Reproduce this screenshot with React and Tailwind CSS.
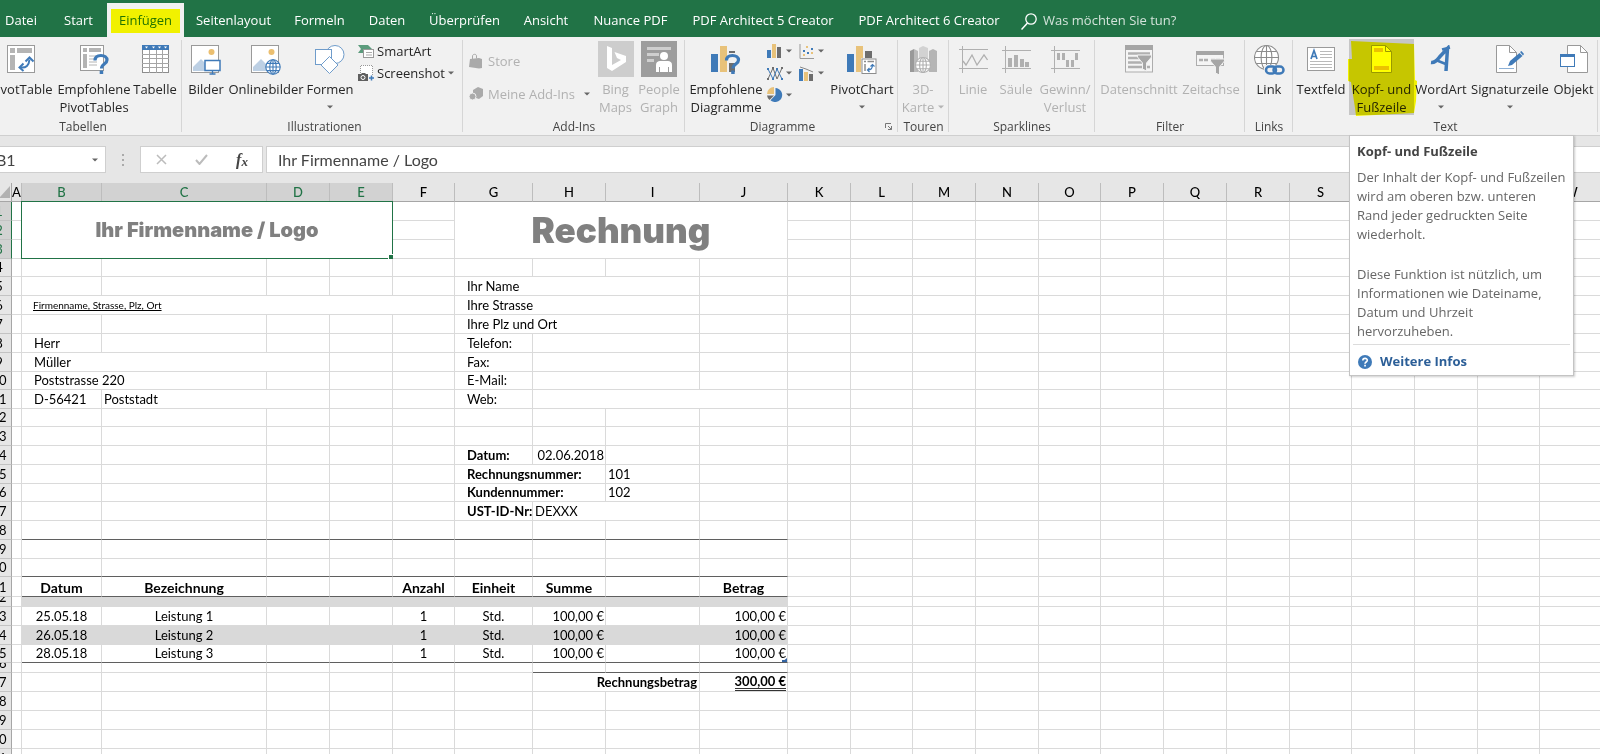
import React from 'react';
import clsx from 'clsx';

const tabs = [
  { name: 'Datei', width: 'w-[58px]' },
  { name: 'Start', width: 'w-[57px]' },
  { name: 'Einfügen', width: 'w-[77px]', active: true },
  { name: 'Seitenlayout', width: 'w-[99px]' },
  { name: 'Formeln', width: 'w-[73px]' },
  { name: 'Daten', width: 'w-[62px]' },
  { name: 'Überprüfen', width: 'w-[93px]' },
  { name: 'Ansicht', width: 'w-[70px]' },
  { name: 'Nuance PDF', width: 'w-[99px]' },
  { name: 'PDF Architect 5 Creator', width: 'w-[166px]' },
  { name: 'PDF Architect 6 Creator', width: 'w-[166px]' },
];

const BLUE = '#3f7ab8';
const SAND = '#e8c27a';
const GREY = '#b4b4b4';
const DARK = '#6d6d6d';

function Svg({ w = 28, h = 28, children, className }) {
  return (
    <svg width={w} height={h} viewBox={`0 0 ${w} ${h}`} fill="none" className={clsx('shrink-0', className)} aria-hidden="true">
      {children}
    </svg>
  );
}

function Arrow({ light }) {
  return (
    <Svg w={6} h={4}>
      <path d="M0 0.5h6L3 3.5z" fill={light ? '#b4b4b4' : '#666'} />
    </Svg>
  );
}

/* ---------- big ribbon icons ---------- */

function PivotTableIcon() {
  return (
    <Svg>
      <rect x="0.5" y="0.5" width="27" height="27" fill="#fff" stroke="#9a9a9a" />
      <path d="M3 3h5v5H3zM10 3h15v5H10zM3 10h5v15H3z" fill={GREY} />
      <path d="M14 22.500c5 .5 8-2 8.500-8" stroke={BLUE} strokeWidth="2" />
      <path d="M18.500 16.500l4-4 4 4M16.500 18.500l-4 4 4 3.500" stroke={BLUE} strokeWidth="2" />
    </Svg>
  );
}

function QuestionMark({ x, y }) {
  return (
    <g transform={`translate(${x} ${y})`}>
      <path d="M1 6.500C1 3 3.500 1.500 7 1.500s6 1.700 6 4.500c0 4.500-5.500 3.500-5.500 8.500" stroke={BLUE} strokeWidth="3.200" />
      <rect x="5.700" y="16.500" width="3.500" height="3.500" fill={BLUE} />
    </g>
  );
}

function RecommendedPivotIcon() {
  return (
    <Svg w={30} h={30}>
      <rect x="1.500" y="0.500" width="23" height="25" fill="#fff" stroke="#9a9a9a" />
      <path d="M4 3h4v4H4zM10 3h12v4H10zM4 9h4v14H4z" fill={GREY} />
      <path d="M10 11h8M10 14h8M10 17h8M10 20h8" stroke={GREY} />
      <QuestionMark x={15} y={9} />
    </Svg>
  );
}

function TableIcon() {
  return (
    <Svg w={27}>
      <rect x="0.500" y="0.500" width="26" height="27" fill="#fff" stroke="#8d8d8d" />
      <path d="M0 0h27v5H0z" fill={BLUE} />
      <path d="M3 1.500h3l-1.500 2zM10 1.500h3l-1.500 2zM16 1.500h3l-1.500 2zM22 1.500h3l-1.500 2z" fill="#fff" />
      <path d="M0 9.500h27M0 13.500h27M0 18.500h27M0 22.500h27M7.500 5v23M14.500 5v23M20.500 5v23" stroke="#a5a5a5" />
    </Svg>
  );
}

function Picture() {
  return (
    <>
      <rect x="0.500" y="0.500" width="27" height="27" fill="#fff" stroke="#9a9a9a" />
      <circle cx="20.500" cy="7" r="3" fill="#ebbf70" />
      <path d="M2 26v-4l8-8 7 7v5z" fill="#bdd0e4" />
    </>
  );
}

function PicturesIcon() {
  return (
    <Svg w={30} h={30}>
      <Picture />
      <rect x="14" y="15.500" width="15" height="10" fill="#fff" stroke={BLUE} strokeWidth="1.500" />
      <path d="M21.500 26v3M18.500 29h6" stroke={BLUE} strokeWidth="1.300" />
    </Svg>
  );
}

function Globe({ cx, cy, r, color }) {
  return (
    <g stroke={color} strokeWidth="1.100" fill="#fff">
      <circle cx={cx} cy={cy} r={r} />
      <ellipse cx={cx} cy={cy} rx={r * 0.45} ry={r} />
      <path d={`M${cx - r} ${cy}h${r * 2}M${cx} ${cy - r}v${r * 2}M${cx - r * 0.85} ${cy - r * 0.5}h${r * 1.7}M${cx - r * 0.85} ${cy + r * 0.5}h${r * 1.7}`} />
    </g>
  );
}

function OnlinePicturesIcon() {
  return (
    <Svg w={30} h={30}>
      <Picture />
      <Globe cx={22} cy={22} r={7.2} color={BLUE} />
    </Svg>
  );
}

function ShapesIcon() {
  return (
    <Svg w={30} h={29}>
      <circle cx="20" cy="9.500" r="9" fill="#fff" stroke="#6f9ccb" />
      <rect x="0.500" y="4.500" width="16" height="15" fill="#fff" stroke="#6f9ccb" />
      <path d="M14.500 11.500l8.500 8.500-8.500 8.500L6 20z" fill="#fff" stroke="#6f9ccb" />
    </Svg>
  );
}

function BingIcon() {
  return (
    <Svg w={36} h={36}>
      <path d="M0 0h36v36H0z" fill="#cdcdcd" />
      <path d="M9 5l5 2v17l9-5-4-2-2.500-6L28 15v6l-14 9-5-3z" fill="#fff" />
    </Svg>
  );
}

function PeopleIcon() {
  return (
    <Svg w={36} h={36}>
      <path d="M0 0h36v36H0z" fill="#9d9d9d" />
      <path d="M6 6h24v3H6zM6 12h12v3H6zM6 18h7v3H6z" fill="#cfcfcf" />
      <circle cx="23" cy="15" r="4" fill="#fff" />
      <path d="M15 31V24c0-3 2-4 4-4h8c2 0 4 1 4 4v7h-3v-5h-1v5h-8v-5h-1v5z" fill="#fff" />
    </Svg>
  );
}

function RecommendedChartsIcon() {
  return (
    <Svg w={30} h={29}>
      <path d="M0 9h7v18H0z" fill={BLUE} />
      <path d="M9 1h7v26H9z" fill={SAND} />
      <path d="M18 6h6v21h-6z" fill={DARK} />
      <path d="M18 8h8v10h-8z" fill="#f1f1f1" />
      <QuestionMark x={14.500} y={9} />
    </Svg>
  );
}

function PivotChartIcon() {
  return (
    <Svg w={30} h={29}>
      <path d="M0 9h7v18H0z" fill={BLUE} />
      <path d="M9 1h7v26H9z" fill={SAND} />
      <path d="M18 6h7v12h-7z" fill={DARK} />
      <rect x="14" y="13" width="16" height="16" fill="#f1f1f1" />
      <rect x="15" y="14" width="14" height="14.500" fill="#fff" stroke="#8d8d8d" />
      <path d="M17 16.500h2M20.500 16.500H27M18 19v7" stroke="#8d8d8d" strokeWidth="1.500" />
      <path d="M21 25c3 0 4.500-1.500 4.500-5M23.500 21.500l2-2 2 2M22.500 23l-2 2 2 2" stroke={BLUE} strokeWidth="1.200" />
    </Svg>
  );
}

function MapIcon() {
  return (
    <Svg>
      <path d="M1 6l4-2v23H1z" fill="#999" />
      <path d="M5 4l4 2v21H5z" fill="#bbb" />
      <path d="M10 3l4-2 5 2v12h-9z" fill="#d2d2d2" />
      <path d="M20 6l4-2 4 2v21h-8z" fill="#b5b5b5" />
      <Globe cx={14} cy={20} r={7.5} color="#b0b0b0" />
    </Svg>
  );
}

function SparkLineIcon() {
  return (
    <Svg w={29}>
      <path d="M3.500 1v27M0 4.500h29M0 23.500h29" stroke="#b0b0b0" />
      <path d="M4 16l3 4 6-10 5 10 7-10 3.500 5" stroke="#b0b0b0" strokeWidth="1.300" />
    </Svg>
  );
}

function SparkColumnIcon() {
  return (
    <Svg w={29}>
      <path d="M3.500 1v27M0 5.500h29M0 23.500h29" stroke="#b0b0b0" />
      <path d="M6 13h4v9H6zM12 10h4v12h-4zM18 14h4v8h-4zM23 17h4v5h-4z" fill="#b0b0b0" />
    </Svg>
  );
}

function SparkWinLossIcon() {
  return (
    <Svg w={29}>
      <path d="M3.500 1v27M0 5.500h29M0 23.500h29" stroke="#b0b0b0" />
      <path d="M6 8h3v7H6zM11 8h3v7h-3zM15 15h3v7h-3zM20 15h3v7h-3zM24 8h3v7h-3z" fill="#b0b0b0" />
    </Svg>
  );
}

function Funnel({ x, y }) {
  return <path transform={`translate(${x} ${y})`} d="M0 0h14v2L9 8v8l-4-2V8L0 2z" fill="#a6a6a6" stroke="#f1f1f1" />;
}

function SlicerIcon() {
  return (
    <Svg>
      <rect x="0.500" y="0.500" width="27" height="26.500" fill="#f5f5f5" stroke="#adadad" />
      <path d="M0 0h28v5H0z" fill="#a6a6a6" />
      <path d="M3 8.500h22M3 13h22M3 17.500h14M3 22h14M20 22h5" stroke="#b0b0b0" strokeWidth="2.500" />
      <Funnel x={12.500} y={10} />
    </Svg>
  );
}

function TimelineIcon() {
  return (
    <Svg w={30} h={30}>
      <rect x="0.500" y="6.500" width="27" height="14" fill="#f5f5f5" stroke="#adadad" />
      <path d="M0 6h28v4H0z" fill="#a6a6a6" />
      <path d="M3 15h10M15 15h10" stroke="#b0b0b0" strokeWidth="2.500" strokeDasharray="4 1" />
      <Funnel x={14.500} y={14} />
    </Svg>
  );
}

function LinkIcon() {
  return (
    <Svg w={31} h={30}>
      <Globe cx={12.500} cy={12.500} r={12} color="#8c8c8c" />
      <path d="M10 20h20v10H10z" fill="#f1f1f1" />
      <rect x="12" y="21.500" width="10" height="7" rx="3.500" stroke={BLUE} strokeWidth="2.500" />
      <rect x="19.500" y="21.500" width="10" height="7" rx="3.500" stroke={BLUE} strokeWidth="2.500" />
    </Svg>
  );
}

function TextBoxIcon() {
  return (
    <Svg>
      <rect x="0.500" y="2.500" width="27" height="23" fill="#fff" stroke="#9a9a9a" />
      <path d="M4 14L7 5.500 10 14M5 11.500h4" stroke={BLUE} strokeWidth="1.700" />
      <path d="M13 6.500h12M13 9.500h12M13 12.500h12M3 16.500h22M3 19.500h22M3 22.500h22" stroke="#b9b9b9" />
    </Svg>
  );
}

function HeaderFooterIcon() {
  return (
    <Svg w={21}>
      <path d="M0.500 0.500h14l6 6v21H0.500z" fill="#fff" stroke="#999" />
      <path d="M14.500 0.500v6h6" stroke="#999" />
      <path d="M3 3h9v4H3zM3 21h15v4H3z" fill="#ebc250" />
    </Svg>
  );
}

function WordArtIcon() {
  return (
    <Svg w={22}>
      <path d="M1 17.500C5 18 7 15 10 11.500L17.500 3.500 16 26" stroke={BLUE} strokeWidth="3.500" />
      <path d="M7 15.500l10 4" stroke={BLUE} strokeWidth="2.500" />
      <path d="M12 4.500L20 2.500" stroke={BLUE} strokeWidth="2.500" />
    </Svg>
  );
}

function SignatureIcon() {
  return (
    <Svg w={28}>
      <path d="M0.500 0.500h13l7 7v20H0.500z" fill="#fff" stroke="#999" />
      <path d="M13.500 0.500v7h7" stroke="#999" />
      <path d="M3 23.500h15" stroke="#8db0d6" />
      <path d="M12 21l2-5L23.500 8l3 3L16 20z" fill={BLUE} />
      <path d="M24 7l1.500-1L28 9l-1 1.500z" fill={BLUE} />
    </Svg>
  );
}

function ObjectIcon() {
  return (
    <Svg w={28}>
      <path d="M7.500 0.500h13l7 7v20h-20z" fill="#fff" stroke="#999" />
      <path d="M20.500 0.500v7h7" stroke="#999" />
      <rect x="0.500" y="9.500" width="14" height="12" fill="#fff" stroke={BLUE} />
      <path d="M0 9h15v3H0z" fill={BLUE} />
    </Svg>
  );
}

/* ---------- small ribbon icons ---------- */

function SmartArtIcon() {
  return (
    <Svg w={16} h={14}>
      <path d="M0 1h10l4 4H8l-2 4H0l3-4z" fill="#5b9b7c" />
      <rect x="5.500" y="5.500" width="10" height="8" fill="#fff" stroke="#999" />
      <path d="M8 8.500h6M8 11h6" stroke="#aaa" />
    </Svg>
  );
}

function ScreenshotIcon() {
  return (
    <Svg w={16} h={16}>
      <path d="M2.500 10V0.500h12V11" stroke="#999" strokeDasharray="1 1" fill="#fff" />
      <path d="M0 9h3l1-1h3l1 1h2v7H0z" fill="#5f5f5f" />
      <circle cx="5" cy="12.500" r="2" fill="#5f5f5f" stroke="#fff" />
      <path d="M11 13h5M13.500 10.500v5" stroke={BLUE} strokeWidth="1.500" />
    </Svg>
  );
}

function StoreIcon() {
  return (
    <Svg w={14} h={16}>
      <path d="M1 6l9-1 3 1v9l-3 .5L0 14z" fill="#aaa" />
      <path d="M3.500 6V3c0-2 4-2.500 4 0v2.500" stroke="#aaa" />
    </Svg>
  );
}

function AddInsIcon() {
  return (
    <Svg w={14} h={14}>
      <path d="M4 3l5-3 5 2v7l-4 3-6-2z" fill="#aaa" />
      <circle cx="3.500" cy="9.500" r="3.500" fill="#aaa" stroke="#f1f1f1" />
    </Svg>
  );
}

function ColumnChartIcon() {
  return (
    <Svg w={14} h={14}>
      <path d="M0 6h4v8H0z" fill={BLUE} />
      <path d="M5 0h4v14H5z" fill={SAND} />
      <path d="M10 3h4v11h-4z" fill={DARK} />
    </Svg>
  );
}

function ScatterIcon() {
  return (
    <Svg w={15} h={15}>
      <path d="M1 0v14.500h14" stroke="#999" />
      <path d="M7 2h2v2H7zM4 10h2v2H4zM12 8h2v2h-2z" fill={SAND} />
      <path d="M4 6h2v2H4zM8 8h2v2H8zM12 4h2v2h-2z" fill={BLUE} />
    </Svg>
  );
}

function LineChartIcon() {
  return (
    <Svg w={16} h={15}>
      <path d="M1 13L6 2l4 11 5-11" stroke={DARK} />
      <path d="M1 3l5 10 4-10 5 10" stroke={BLUE} />
      <path d="M0 2h2v2H0zM5 12h2v2H5zM9 2h2v2H9zM14 12h2v2h-2z" fill={BLUE} />
      <path d="M0 12h2v2H0zM5 1h2v2H5zM14 1h2v2h-2z" fill={DARK} />
    </Svg>
  );
}

function ComboIcon() {
  return (
    <Svg w={15} h={15}>
      <path d="M0 3h4v12H0z" fill={BLUE} />
      <path d="M5 6h4v9H5z" fill={SAND} />
      <path d="M10 8h4v7h-4z" fill={DARK} />
      <path d="M1 1l6 2 7 3" stroke="#888" />
    </Svg>
  );
}

function PieIcon() {
  return (
    <Svg w={16} h={16}>
      <path d="M8.500 1a7 7 0 11-5 12.200L8.500 8z" fill={BLUE} />
      <path d="M7 0v7H0a7 7 0 017-7z" fill={SAND} />
      <path d="M0 8.500h7L2.500 13A7 7 0 010 8.500z" fill={DARK} />
    </Svg>
  );
}

/* ---------- ribbon building blocks ---------- */

function BigButton({ icon, lines, width, disabled, arrow, tall, children }) {
  return (
    <div className={clsx('relative shrink-0', width)}>
      <button
        type="button"
        disabled={disabled}
        className={clsx(
          'flex h-[79px] w-full flex-col items-center text-[13px] leading-[18px] whitespace-nowrap',
          tall ? 'pt-1' : 'pt-2',
          disabled ? 'text-[#b1b1b1]' : 'text-[#262626]'
        )}
      >
        <span className={clsx('flex justify-center', tall ? 'h-[39px]' : 'h-[35px]')}>{icon}</span>
        {lines.map((line) => (
          <span key={line} className="flex items-center gap-1">
            {line}
            {arrow === 'inline' && line === lines[lines.length - 1] && <Arrow light={disabled} />}
          </span>
        ))}
        {arrow === 'below' && (
          <span className="flex h-[18px] items-center">
            <Arrow />
          </span>
        )}
      </button>
      {children}
    </div>
  );
}

function Group({ label, width, launcher, children }) {
  return (
    <section className={clsx('relative shrink-0', width)}>
      <div className="flex h-[79px]">{children}</div>
      <div className={clsx('pt-[2px] text-center text-[12px] leading-[17px] text-[#444]', launcher && 'pr-[18px]')}>{label}</div>
      {launcher && (
        <button type="button" aria-label="Diagramme-Dialog" className="absolute right-[6px] bottom-[5px]">
          <Svg w={7} h={7}>
            <path d="M0.500 5V0.500H6M3 3l3.500 3.500M6.500 3v3.500H3" stroke="#777" />
          </Svg>
        </button>
      )}
      <span className="absolute top-[3px] right-0 bottom-[3px] w-px bg-[#d6d6d6]" />
    </section>
  );
}

function SmallButton({ icon, label, disabled, arrow, wide }) {
  return (
    <button
      type="button"
      disabled={disabled}
      className={clsx('flex items-center text-[13px] leading-[18px] whitespace-nowrap', disabled ? 'text-[#b1b1b1]' : 'text-[#262626]', wide && 'w-[121px]')}
    >
      <span className="flex w-[19px] items-center">{icon}</span>
      <span className={clsx(wide && 'flex-1 text-left')}>{label}</span>
      {arrow && <span className="ml-[3px]"><Arrow /></span>}
    </button>
  );
}

function ChartButton({ icon, label }) {
  return (
    <button type="button" aria-label={label} className="flex h-[22px] w-[32px] items-center justify-between pr-[7px]">
      {icon}
      <Arrow />
    </button>
  );
}

function HelpTooltip() {
  return (
    <div role="tooltip" className="absolute top-[98px] left-0 z-20 w-[225px] border border-[#c4c4c4] bg-white px-[3px] pt-[6px] text-[13px] leading-[19px] text-[#666] shadow-[1px_1px_2px_rgba(0,0,0,0.2)]">
      <div className="px-1 font-bold text-[#444]">Kopf- und Fußzeile</div>
      <p className="mt-[7px] px-1 whitespace-nowrap">
        Der Inhalt der Kopf- und Fußzeilen<br />
        wird am oberen bzw. unteren<br />
        Rand jeder gedruckten Seite<br />
        wiederholt.
      </p>
      <p className="mt-[21px] px-1 whitespace-nowrap">
        Diese Funktion ist nützlich, um<br />
        Informationen wie Dateiname,<br />
        Datum und Uhrzeit<br />
        hervorzuheben.
      </p>
      <div className="mt-[3px] flex h-[31px] items-center gap-2 border-t border-[#dcdcdc] px-[5px] pt-[3px]">
        <Svg w={14} h={14}>
          <circle cx="7" cy="7" r="7" fill={BLUE} />
          <path d="M4.800 5.500C4.800 2.700 9.300 2.700 9.300 5.300 9.300 7 7 7 7 8.700" stroke="#fff" strokeWidth="1.600" />
          <path d="M6.200 9.700h1.700v1.700H6.200z" fill="#fff" />
        </Svg>
        <a href="#infos" className="font-bold text-[#2b5e97]">Weitere Infos</a>
      </div>
    </div>
  );
}

function Ribbon() {
  return (
    <div className="relative z-10 flex border-b border-[#cfcfcf] bg-[#f1f1f1]">
      <div className="-ml-4 flex">
        <Group label="Tabellen" width="w-[198px]">
          <BigButton icon={<PivotTableIcon />} lines={['PivotTable']} width="w-[74px]" />
          <BigButton icon={<RecommendedPivotIcon />} lines={['Empfohlene', 'PivotTables']} width="w-[72px]" />
          <BigButton icon={<TableIcon />} lines={['Tabelle']} width="w-[50px]" />
        </Group>
        <Group label="Illustrationen" width="w-[281px] pl-1">
          <BigButton icon={<PicturesIcon />} lines={['Bilder']} width="w-[40px]" />
          <BigButton icon={<OnlinePicturesIcon />} lines={['Onlinebilder']} width="w-[80px]" />
          <BigButton icon={<ShapesIcon />} lines={['Formen']} width="w-[48px]" arrow="below" />
          <div className="flex flex-col items-start gap-1 pt-[5px] pl-1">
            <SmallButton icon={<SmartArtIcon />} label="SmartArt" />
            <SmallButton icon={<ScreenshotIcon />} label="Screenshot" arrow />
          </div>
        </Group>
        <Group label="Add-Ins" width="w-[222px]">
          <div className="flex w-[131px] flex-col items-start gap-[15px] pt-[15px] pl-[6px]">
            <SmallButton icon={<StoreIcon />} label="Store" disabled />
            <SmallButton icon={<AddInsIcon />} label="Meine Add-Ins" disabled arrow wide />
          </div>
          <BigButton icon={<BingIcon />} lines={['Bing', 'Maps']} width="w-[43px]" tall disabled />
          <BigButton icon={<PeopleIcon />} lines={['People', 'Graph']} width="w-[44px]" tall disabled />
        </Group>
        <Group label="Diagramme" width="w-[213px]" launcher>
          <BigButton icon={<RecommendedChartsIcon />} lines={['Empfohlene', 'Diagramme']} width="w-[82px]" />
          <div className="grid grid-cols-2 content-start pt-[3px]">
            <ChartButton icon={<ColumnChartIcon />} label="Säulendiagramm" />
            <ChartButton icon={<ScatterIcon />} label="Punktdiagramm" />
            <ChartButton icon={<LineChartIcon />} label="Liniendiagramm" />
            <ChartButton icon={<ComboIcon />} label="Kombidiagramm" />
            <ChartButton icon={<PieIcon />} label="Kreisdiagramm" />
          </div>
          <BigButton icon={<PivotChartIcon />} lines={['PivotChart']} width="w-[62px]" arrow="below" />
        </Group>
        <Group label="Touren" width="w-[51px]">
          <BigButton icon={<MapIcon />} lines={['3D-', 'Karte']} width="w-[50px]" arrow="inline" disabled />
        </Group>
        <Group label="Sparklines" width="w-[146px]">
          <BigButton icon={<SparkLineIcon />} lines={['Linie']} width="w-[48px]" disabled />
          <BigButton icon={<SparkColumnIcon />} lines={['Säule']} width="w-[38px]" disabled />
          <BigButton icon={<SparkWinLossIcon />} lines={['Gewinn/', 'Verlust']} width="w-[60px]" disabled />
        </Group>
        <Group label="Filter" width="w-[150px]">
          <BigButton icon={<SlicerIcon />} lines={['Datenschnitt']} width="w-[88px]" disabled />
          <BigButton icon={<TimelineIcon />} lines={['Zeitachse']} width="w-[56px]" disabled />
        </Group>
        <Group label="Links" width="w-[48px]">
          <BigButton icon={<LinkIcon />} lines={['Link']} width="w-[48px]" />
        </Group>
        <Group label="Text" width="w-[305px]">
          <BigButton icon={<TextBoxIcon />} lines={['Textfeld']} width="w-[56px]" />
          <BigButton icon={<HeaderFooterIcon />} lines={['Kopf- und', 'Fußzeile']} width="w-[65px]">
            <span className="absolute top-[2px] left-0 -z-10 h-[76px] w-full bg-[#c6c6c6]" />
            <svg width="70" height="76" viewBox="0 0 70 76" className="absolute top-[3px] -left-px mix-blend-multiply" aria-hidden="true">
              <path d="M3 1l63 3 1 36 2 1-1 20-2 12-58 3-1-8-4-26-3-1V19h4z" fill="#ffff00" />
            </svg>
            <HelpTooltip />
          </BigButton>
          <BigButton icon={<WordArtIcon />} lines={['WordArt']} width="w-[54px]" arrow="below" />
          <BigButton icon={<SignatureIcon />} lines={['Signaturzeile']} width="w-[84px]" arrow="below" />
          <BigButton icon={<ObjectIcon />} lines={['Objekt']} width="w-[43px]" />
        </Group>
      </div>
    </div>
  );
}

function TabBar() {
  return (
    <nav className="flex h-[37px] items-end bg-[#217346] text-[13px] whitespace-nowrap text-white">
      <div className="-ml-2 flex">
        {tabs.map((tab) => (
          <button
            key={tab.name}
            type="button"
            className={clsx('flex h-[34px] shrink-0 items-center justify-center pt-[2px]', tab.width, tab.active && 'bg-[#f1f1f1] text-[#217346]')}
          >
            {tab.active ? (
              <span className="relative">
                {tab.name}
                <span className="absolute -inset-x-[8px] -inset-y-[2px] bg-[#ffff00] mix-blend-multiply" />
              </span>
            ) : (
              tab.name
            )}
          </button>
        ))}
      </div>
      <label className="flex h-[34px] items-center gap-[6px] pt-[2px] pl-[9px]">
        <Svg w={16} h={17}>
          <circle cx="10" cy="6" r="5.200" stroke="#fff" strokeWidth="1.300" />
          <path d="M6.500 10L0.500 16.500" stroke="#fff" strokeWidth="1.500" />
        </Svg>
        <input type="text" aria-label="Suche" placeholder="Was möchten Sie tun?" className="w-[160px] bg-transparent outline-none placeholder:text-[#d3e3da]" />
      </label>
    </nav>
  );
}

function FormulaBar() {
  return (
    <div className="flex h-[47px] items-start bg-[#e6e6e6] pt-[10px] text-[#444]">
      <div className="-ml-[9px] flex h-[27px] w-[115px] items-center border border-[#cfcfcf] bg-white pr-[7px]">
        <input aria-label="Namenfeld" defaultValue="B1" className="w-full min-w-0 bg-transparent pl-1 font-[Lato] text-[16px] outline-none" />
        <Arrow />
      </div>
      <div className="flex h-[27px] w-[34px] items-center justify-center">
        <Svg w={2} h={12}>
          <path d="M0 0h2v2H0zM0 5h2v2H0zM0 10h2v2H0z" fill="#aaa" />
        </Svg>
      </div>
      <div className="flex h-[27px] w-[123px] items-center border border-[#cfcfcf] bg-white">
        <button type="button" aria-label="Abbrechen" className="flex w-[40px] justify-center">
          <Svg w={11} h={11}>
            <path d="M1 1l9 9M10 1l-9 9" stroke="#bcbcbc" strokeWidth="1.500" />
          </Svg>
        </button>
        <button type="button" aria-label="Eingeben" className="flex w-[41px] justify-center">
          <Svg w={13} h={11}>
            <path d="M1 6l3.500 4L12 1" stroke="#bcbcbc" strokeWidth="2" />
          </Svg>
        </button>
        <button type="button" className="flex w-[40px] justify-center font-['Liberation_Serif',serif] text-[16px] leading-none font-bold italic">
          f<span className="pt-[3px] text-[13px] leading-none">x</span>
        </button>
      </div>
      <input
        aria-label="Bearbeitungsleiste"
        defaultValue="Ihr Firmenname / Logo"
        className="ml-[3px] h-[27px] min-w-0 flex-1 border border-r-0 border-[#cfcfcf] bg-white pl-[11px] font-[Lato] text-[16px] outline-none"
      />
    </div>
  );
}

/* ---------- sheet ---------- */

const columns = [
  ['A', 10], ['B', 80], ['C', 165], ['D', 63], ['E', 63], ['F', 62], ['G', 78], ['H', 73],
  ['I', 94], ['J', 88], ['K', 63], ['L', 62], ['M', 63], ['N', 63], ['O', 62], ['P', 63],
  ['Q', 63], ['R', 63], ['S', 62], ['T', 63], ['U', 63], ['V', 62], ['W', 63],
];

const left = 'pl-[12px] text-left';
const bold = 'pl-[12px] text-left font-bold';
const near = 'pl-[2px] text-left';
const right = 'pr-[1px] text-right';
const head = 'text-center font-bold text-[14px]';

function item(date, name) {
  return {
    B: [date, 1, 'text-center'],
    C: [name, 1, 'text-center'],
    F: ['1', 1, 'text-center'],
    G: ['Std.', 1, 'text-center'],
    H: ['100,00 €', 1, right],
    J: ['100,00 €', 1, right],
  };
}

// cell entry: [text, colSpan, classes, rowSpan]
const rows = [
  { h: 19, cells: { B: ['Ihr Firmenname / Logo', 4, 'title', 3], G: ['Rechnung', 4, 'heading', 3] } },
  { h: 19, covered: true },
  { h: 19, covered: true },
  { h: 18 },
  { h: 19, cells: { G: ['Ihr Name', 3, left] } },
  { h: 19, cells: { B: ['Firmenname, Strasse, Plz, Ort', 5, 'pl-[11px] text-left text-[10px] underline'], G: ['Ihre Strasse', 3, left] } },
  { h: 19, cells: { G: ['Ihre Plz und Ort', 3, left] } },
  { h: 19, cells: { B: ['Herr', 1, left], G: ['Telefon:', 1, left], H: ['', 2] } },
  { h: 19, cells: { B: ['Müller', 3, left], G: ['Fax:', 1, left], H: ['', 2] } },
  { h: 18, cells: { B: ['Poststrasse 220', 2, left], G: ['E-Mail:', 1, left], H: ['', 2] } },
  { h: 19, cells: { B: ['D-56421', 1, left], C: ['Poststadt', 2, near], G: ['Web:', 1, left], H: ['', 3] } },
  { h: 18 },
  { h: 19 },
  { h: 19, cells: { G: ['Datum:', 1, bold], H: ['02.06.2018', 1, right] } },
  { h: 19, cells: { G: ['Rechnungsnummer:', 2, bold], I: ['101', 1, near] } },
  { h: 18, cells: { G: ['Kundennummer:', 2, bold], I: ['102', 1, near] } },
  { h: 19, cells: { G: ['UST-ID-Nr:', 1, bold], H: ['DEXXX', 2, near] } },
  { h: 19, rule: 'B' },
  { h: 19 },
  { h: 18, rule: 'B' },
  {
    h: 20,
    rule: 'B',
    cells: {
      B: ['Datum', 1, head],
      C: ['Bezeichnung', 1, head],
      F: ['Anzahl', 1, head],
      G: ['Einheit', 1, head],
      H: ['Summe', 1, head],
      J: ['Betrag', 1, head],
    },
  },
  { h: 10, shaded: true },
  { h: 19, cells: item('25.05.18', 'Leistung 1') },
  { h: 19, shaded: true, cells: item('26.05.18', 'Leistung 2') },
  { h: 18, rule: 'B', mark: true, cells: item('28.05.18', 'Leistung 3') },
  { h: 10, rule: 'H' },
  { h: 19, cells: { H: ['Rechnungsbetrag', 2, 'pr-[2px] text-right font-bold'], J: ['300,00 €', 1, 'total'] } },
  { h: 19 },
  { h: 19 },
  { h: 19 },
  { h: 19 },
];

const heights = { 10: 'h-[10px]', 18: 'h-[18px]', 19: 'h-[19px]', 20: 'h-[20px]' };

const styles = {
  title: "relative align-middle text-center font-['Inter',sans-serif] font-black text-[20px] text-[#808080]",
  heading: "align-middle text-center font-['Inter',sans-serif] font-black text-[35px] leading-[36px] text-[#808080]",
  total: 'pr-[1px] text-right font-bold',
};

function Row({ row, number }) {
  const cells = [];
  for (let i = 0; i < columns.length; i++) {
    const name = columns[i][0];
    if (row.covered && 'BCDEGHIJ'.includes(name)) continue;
    const [text = '', span = 1, cls = '', rowSpan = 1] = row.cells?.[name] ?? [];
    const inTable = name >= 'B' && name <= 'J';
    const ruled = row.rule && name >= row.rule && name <= 'J';
    const shaded = row.shaded && inTable;
    cells.push(
      <td
        key={name}
        colSpan={span}
        rowSpan={rowSpan}
        className={clsx(
          'border-r border-b p-0 align-bottom',
          ruled ? 'border-b-[#5f5f5f]' : shaded ? 'border-b-[#d9d9d9]' : 'border-b-[#dadada]',
          shaded ? 'border-r-[#d9d9d9] bg-[#d9d9d9]' : 'border-r-[#dadada]',
          row.mark && name === 'J' && 'relative',
          styles[cls] ?? cls
        )}
      >
        {cls === 'total' ? <span className="inline-block border-b-[3px] border-double border-[#333] leading-[14px]">{text}</span> : text}
        {cls === 'title' && (
          <>
            <span className="absolute -inset-px border border-[#217346]" />
            <span className="absolute -right-px -bottom-px size-[5px] border-t border-l border-white bg-[#217346]" />
          </>
        )}
        {row.mark && name === 'J' && <span className="absolute right-0 bottom-0 h-[4px] w-[5px] bg-[#3465a4] [clip-path:polygon(100%_0,100%_100%,0_100%,0_50%,50%_50%)]" />}
      </td>
    );
    i += span - 1;
  }
  const selected = number <= 3;
  return (
    <tr className={heights[row.h]}>
      <th
        scope="row"
        className={clsx(
          'border-r border-b border-b-[#c3c3c3] p-0 text-center align-bottom font-normal',
          selected ? 'border-r-[#217346] bg-[#d2d2d2] text-[#217346]' : 'border-r-[#a6a6a6] bg-[#e6e6e6] text-black'
        )}
      >
        <span className={clsx('flex items-end justify-center overflow-hidden', row.h === 10 ? 'h-[9px]' : 'h-[17px]')}>{number}</span>
      </th>
      {cells}
    </tr>
  );
}

function Sheet() {
  return (
    <div className="-ml-[13px] min-h-0 flex-1 overflow-hidden">
      <table className="w-0 table-fixed border-separate border-spacing-0 font-[Lato,sans-serif] text-[13px] leading-[17px] whitespace-nowrap text-black">
        <colgroup>
          <col className="w-[25px]" />
          {columns.map(([name, width]) => (
            <col key={name} style={{ width }} />
          ))}
        </colgroup>
        <thead>
          <tr className="h-[19px] bg-[#e6e6e6]">
            <th className="border-r border-b border-[#a6a6a6] p-0">
              <Svg w={12} h={12} className="ml-auto">
                <path d="M11 0v12H0z" fill="#b2b2b2" />
              </Svg>
            </th>
            {columns.map(([name]) => {
              const selected = name >= 'B' && name <= 'E';
              return (
                <th
                  key={name}
                  scope="col"
                  className={clsx(
                    'border-r border-b border-r-[#bdbdbd] border-b-[#a6a6a6] p-0 text-center align-bottom font-medium',
                    selected ? 'bg-[#d2d2d2] text-[#217346]' : 'text-black'
                  )}
                >
                  {name}
                </th>
              );
            })}
          </tr>
        </thead>
        <tbody>
          {rows.map((row, i) => (
            <Row key={i} row={row} number={i + 1} />
          ))}
        </tbody>
      </table>
    </div>
  );
}

export default function App() {
  return (
    <div className="flex h-screen flex-col overflow-hidden bg-white font-['Open_Sans','Noto_Sans',sans-serif]">
      <TabBar />
      <Ribbon />
      <FormulaBar />
      <Sheet />
    </div>
  );
}
